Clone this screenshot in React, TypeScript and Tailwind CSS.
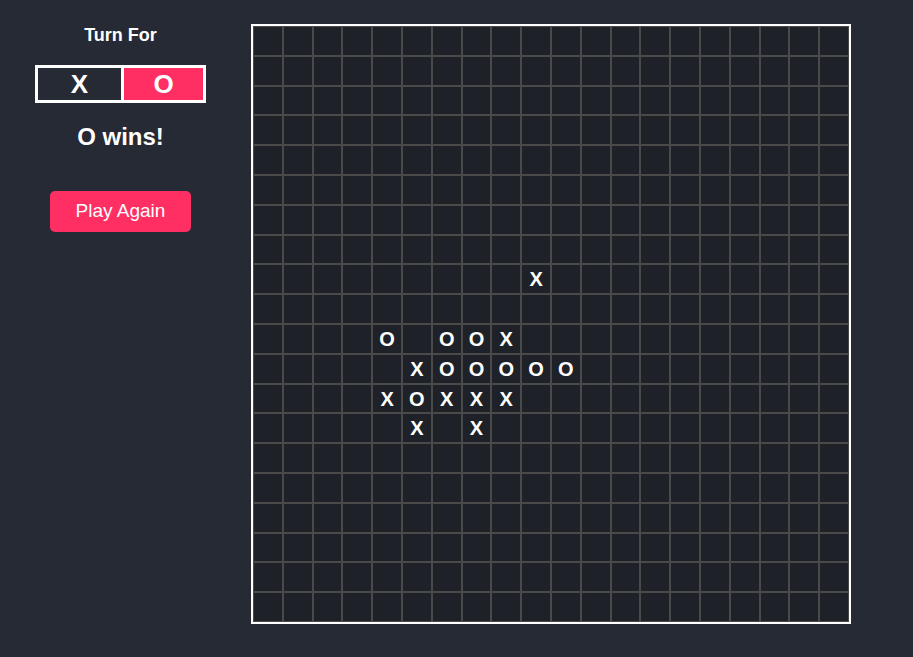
import React from 'react';

const SIZE = 20;

// row, col -> mark
const marks: Record<string, string> = {
  '8-9': 'X',
  '10-4': 'O',
  '10-6': 'O',
  '10-7': 'O',
  '10-8': 'X',
  '11-5': 'X',
  '11-6': 'O',
  '11-7': 'O',
  '11-8': 'O',
  '11-9': 'O',
  '11-10': 'O',
  '12-4': 'X',
  '12-5': 'O',
  '12-6': 'X',
  '12-7': 'X',
  '12-8': 'X',
  '13-5': 'X',
  '13-7': 'X',
};

const Board = () => {
  const cells = [];
  for (let r = 0; r < SIZE; r++) {
    for (let c = 0; c < SIZE; c++) {
      const mark = marks[`${r}-${c}`];
      cells.push(
        <div
          key={`${r}-${c}`}
          className="border border-[#4a4a4a] bg-[#1e2128] flex items-center justify-center text-white font-bold text-[20px]"
        >
          {mark}
        </div>
      );
    }
  }
  return (
    <div className="w-[600px] h-[600px] border-2 border-white">
      <div className="grid grid-cols-20 grid-rows-20 w-full h-full">{cells}</div>
    </div>
  );
};

const App = () => {
  return (
    <div
      className="min-h-screen w-full bg-[#262a35] flex items-start pt-[24px]"
      style={{ fontFamily: '"Liberation Sans", Arial, sans-serif' }}
    >
      <div className="w-[241px] flex flex-col items-center text-white">
        <div className="text-[18px] font-bold leading-[22px]">Turn For</div>
        <div className="mt-[19px] flex w-[171px] h-[38px] border-[3px] border-white">
          <div className="w-[86px] border-r-[3px] border-white flex items-center justify-center text-[26px] font-bold">
            X
          </div>
          <div className="flex-1 bg-[#ff2e63] flex items-center justify-center text-[26px] font-bold">
            O
          </div>
        </div>
        <div className="mt-[21px] text-2xl font-bold leading-[26px]">O wins!</div>
        <button className="mt-[41px] w-[141px] h-[41px] rounded-[5px] bg-[#ff2e63] text-white text-[19px]">
          Play Again
        </button>
      </div>
      <div className="ml-[10px]">
        <Board />
      </div>
    </div>
  );
};

export default App;
